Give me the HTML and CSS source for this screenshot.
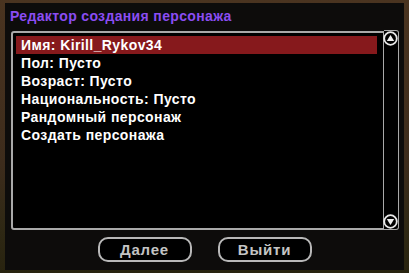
FILE: index.html
```html
<!DOCTYPE html>
<html lang="ru">
<head>
<meta charset="utf-8">
<link rel="stylesheet" href="styles.css">
</head>
<body>
<div class="panel">
  <div class="title">Редактор создания персонажа</div>
  <div class="listwrap">
    <div class="list">
      <div class="row sel">Имя: Kirill_Rykov34</div>
      <div class="row">Пол: Пусто</div>
      <div class="row">Возраст: Пусто</div>
      <div class="row">Национальность: Пусто</div>
      <div class="row">Рандомный персонаж</div>
      <div class="row">Создать персонажа</div>
    </div>
    <div class="scroll">
      <svg class="arrow" width="15" height="15" viewBox="0 0 15 15"><circle cx="7.5" cy="7.5" r="6.3" fill="#000" stroke="#e8e8e8" stroke-width="1.8"/><path d="M3.8 10 L7.5 4 L11.2 10 Z" fill="#f0f0f0"/></svg>
      <svg class="arrow" width="15" height="15" viewBox="0 0 15 15"><circle cx="7.5" cy="7.5" r="6.3" fill="#000" stroke="#e8e8e8" stroke-width="1.8"/><path d="M3.8 5 L7.5 11 L11.2 5 Z" fill="#f0f0f0"/></svg>
    </div>
  </div>
  <div class="buttons">
    <div class="btn">Далее</div>
    <div class="btn">Выйти</div>
  </div>
</div>
</body>
</html>
```
FILE: styles.css
```css
html, body {
  margin: 0;
  padding: 0;
}
body {
  width: 409px;
  height: 273px;
  overflow: hidden;
  background: linear-gradient(180deg, #4a3420 0%, #3d2c1c 60%, #2e2814 85%, #28230f 100%);
  font-family: "Liberation Sans", Arial, sans-serif;
  padding-top: 3px;
  box-sizing: border-box;
}
.panel {
  margin-left: 5px;
  width: 399px;
  height: 267px;
  background: #0d0c0b;
  box-sizing: border-box;
  padding: 0 0 0 5px;
  display: flex;
  flex-direction: column;
}
.title {
  height: 28px;
  line-height: 28px;
  margin-top: -1px;
  color: #8b4df2;
  font-weight: bold;
  font-size: 14px;
  letter-spacing: 0.35px;
}
.listwrap {
  display: flex;
  margin-left: 1px;
  height: 199px;
  margin-top: 1px;
}
.list {
  width: 373px;
  box-sizing: border-box;
  border: 2px solid #a9a9a9;
  border-right: 1px solid #a9a9a9;
  border-radius: 3px 0 0 3px;
  background: #000;
  padding: 3px 6px 0 3px;
}
.row {
  height: 18px;
  line-height: 18px;
  color: #fff;
  font-weight: bold;
  font-size: 14px;
  letter-spacing: 0.4px;
  padding-left: 5px;
}
.row.sel {
  background: #86191c;
}
.scroll {
  width: 15px;
  margin-top: -1px;
  height: 200px;
  box-sizing: border-box;
  border: 1px solid #a9a9a9;
  border-left: none;
  border-radius: 0 3px 3px 0;
  background: #000;
  display: flex;
  flex-direction: column;
  justify-content: space-between;
  align-items: center;
}
.arrow {
  display: block;
  margin-left: -1px;
}
.buttons {
  display: flex;
  justify-content: center;
  gap: 26px;
  margin-top: 7px;
  margin-left: -5px;
}
.btn {
  width: 94px;
  height: 25px;
  box-sizing: border-box;
  border: 2px solid #b8b8b8;
  border-radius: 10px;
  background: #000;
  color: #c4c4c4;
  font-weight: bold;
  font-size: 15px;
  line-height: 21px;
  text-align: center;
  letter-spacing: 0.8px;
}
```
